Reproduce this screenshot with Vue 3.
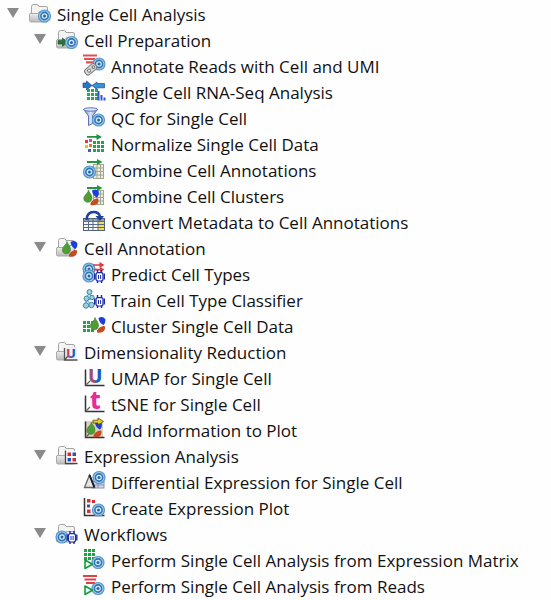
<template>
  <!-- Shared icon shapes -->
  <svg class="sprite" aria-hidden="true">
    <defs>
      <linearGradient id="folderFill" x1="0" y1="0" x2="0" y2="1">
        <stop offset="0" stop-color="#fafafa" />
        <stop offset="1" stop-color="#b8b8b8" />
      </linearGradient>
      <linearGradient id="arcFill" x1="0" y1="0.6" x2="1" y2="0.3">
        <stop offset="0.1" stop-color="#3f74b8" />
        <stop offset="0.3" stop-color="#d8394a" />
        <stop offset="0.5" stop-color="#2467c4" />
        <stop offset="1" stop-color="#1c50a8" />
      </linearGradient>
      <linearGradient id="funnelFill" x1="0" y1="0" x2="1" y2="0">
        <stop offset="0" stop-color="#7186c9" />
        <stop offset="0.5" stop-color="#dce5f8" />
        <stop offset="1" stop-color="#6f88c8" />
      </linearGradient>
      <g id="folder">
        <path d="M2.500 9V2.500Q2.500 .5 4.500 .5H8Q9.500 .5 10 2.500H17Q18.500 2.500 18.500 4V16H2.500Z" fill="#f4f4f4" stroke="#a4a4a4" />
        <path d="M1 9.500H9L10.500 7.500H18V18H2Q.5 18 .5 16.500V10Z" fill="url(#folderFill)" stroke="#aaa" />
      </g>
      <g id="cell">
        <circle r="6" fill="#a3c9ea" stroke="#5a97c9" stroke-width="1.200" />
        <circle r="3.600" fill="#d9ebf8" stroke="#2e76b4" stroke-width="1.600" />
        <circle r="1.500" fill="#1f67a8" />
      </g>
      <g id="robot">
        <path d="M3.500 0V3M7.500 0V3M3.500 10V13M7.500 10V13" stroke="#1b2aa5" stroke-width="1.400" fill="none" />
        <path d="M.7 3.500V9.500M10.300 3.500V9.500" stroke="#1b2aa5" stroke-width="1.400" />
        <rect x="2" y="2.700" width="7" height="8.300" rx="2" fill="#fff" stroke="#1b2aa5" stroke-width="1.200" />
        <path d="M4.500 5V9M6.600 5V9" stroke="#1b2aa5" />
      </g>
      <g id="clusters">
        <path d="M4.500 0C5 2.500 8.200 4.500 8 8C7.800 11 6 12.500 3.500 12.300C.3 12 -1 9 .3 6.500C1.500 4 4 3 4.500 0Z" fill="#4f9c36" stroke="#3f7f2d" stroke-width=".6" />
        <path d="M8 .5Q12 -2 14.800 1.500Q15.300 5.500 12.800 7.500Q8.500 5.500 8 .5Z" fill="#1a3fdc" />
        <path d="M6.500 13Q9 8.500 14 8.500Q15.500 11 13 14Q9.500 16 6.500 15Z" fill="#c74a20" />
      </g>
      <g id="axes">
        <path d="M2.500 1.500V17.500H21.500" fill="none" stroke="#333" stroke-width="1.500" />
        <path d="M2.500 17.500L7 13" stroke="#666" stroke-width="1.200" />
      </g>
      <g id="longArrow">
        <path d="M0 2H10V0L15.500 3L10 6V4H0Z" fill="#23963e" />
      </g>
      <g id="sheet">
        <rect x=".5" y=".5" width="10" height="14" fill="#efeedd" stroke="#a0a690" />
        <path d="M.5 4H10.500M.5 7.500H10.500M.5 11H10.500M4 .5V14.500M7.500 .5V14.500" stroke="#a0a690" />
      </g>
      <path id="play" d="M0 0V8.500L7.500 4.200Z" fill="#e9fff0" stroke="#159b43" stroke-width="1.600" stroke-linejoin="round" />

      <g id="icon-single-cell">
        <use href="#folder" />
        <use href="#cell" x="15.500" y="12" />
      </g>
      <g id="icon-preparation">
        <use href="#folder" />
        <path d="M2 10.500H6.500V8L11.500 12.200L6.500 16.500V14H2Z" fill="#28743a" stroke="#184f27" stroke-width=".6" />
        <use href="#cell" x="15.500" y="12.500" />
      </g>
      <g id="icon-annotate">
        <path d="M0 -.5H14M1 3H12M3 6.300H11" stroke="#dc5055" stroke-width="2.200" />
        <use href="#cell" x="16" y="8" />
        <g transform="translate(8 13) rotate(-40)">
          <rect x="-7" y="-3.300" width="13" height="6.600" rx="2.500" fill="#dadada" stroke="#7d7d7d" />
          <circle cx="3" cy="0" r="1.300" fill="#fff" stroke="#666" />
          <circle cx="-2.500" cy="0" r="1.500" fill="#fff" stroke="#777" />
        </g>
      </g>
      <g id="icon-rna">
        <path d="M0 1H3.500V-1L9 3.500L3.500 8V5.500H0Z" fill="#2377c5" stroke="#174f91" stroke-width=".7" />
        <path d="M9 3.500L14 0V1.500H21.500V5.800H14V7.500Z" fill="#3a8ed3" stroke="#174f91" stroke-width=".7" />
        <g fill="#28a650">
          <rect v-for="n in 9" :key="n" :x="4 + ((n - 1) % 3) * 4" :y="7 + Math.floor((n - 1) / 3) * 4" width="3" height="3" />
        </g>
        <path d="M15.500 18.500V9M18.500 18.500V13M21.500 18.500V15.500" stroke="#3157d8" stroke-width="2" />
      </g>
      <g id="icon-qc">
        <path d="M.7 1.500L5.500 8V17.500L9.500 15.500V8L14.500 1.500Z" fill="url(#funnelFill)" stroke="#5a72b9" />
        <ellipse cx="7.600" cy="1.500" rx="7" ry="1.700" fill="#dbe4f8" stroke="#5a72b9" />
        <use href="#cell" x="15.500" y="12" />
      </g>
      <g id="icon-normalize">
        <path d="M4 2H13.500V0L19 3L13.500 6V3.800H4Z" fill="#20913c" />
        <g fill="#25a349">
          <rect v-for="n in 9" :key="n" :x="10 + ((n - 1) % 3) * 4" :y="7 + Math.floor((n - 1) / 3) * 4" width="3" height="3" />
        </g>
        <rect x="2" y="6" width="3" height="3" fill="#e03a42" />
        <rect x="6" y="5" width="3" height="3" fill="#e93bd0" />
        <rect x="2" y="11" width="3" height="3" fill="#e3bf22" />
        <rect x="6" y="10" width="3" height="3" fill="#e07b2b" />
        <rect x="5" y="15" width="3" height="3" fill="#4b56c9" />
      </g>
      <g id="icon-combine-annotations">
        <use href="#sheet" x="10" y="4" />
        <use href="#longArrow" x="4" y="-1" />
        <use href="#cell" x="6.500" y="12" />
      </g>
      <g id="icon-combine-clusters">
        <use href="#sheet" x="10" y="4" />
        <use href="#longArrow" x="4" y="-1" />
        <use href="#clusters" x="1" y="4" />
      </g>
      <g id="icon-convert">
        <rect x=".5" y="6.500" width="21" height="12" fill="#f5f7fb" stroke="#53617c" />
        <rect x="1" y="7" width="20" height="3" fill="#93a2bb" />
        <rect x="15" y="9" width="6" height="9" fill="#f0db54" />
        <path d="M.5 9.500H21.500M.5 12.500H21.500M.5 15.500H21.500M5.500 6.500V18.500M10 6.500V18.500M15 6.500V18.500" stroke="#596a86" />
        <path d="M3.500 8Q4 0 10.500 0Q16 0 17 4.500" fill="none" stroke="#1f3f9b" stroke-width="2.400" />
        <path d="M12.500 4H21L17 9Z" fill="#1f3f9b" />
      </g>
      <g id="icon-annotation">
        <use href="#folder" />
        <use href="#clusters" x="6.500" y="3.500" />
      </g>
      <g id="icon-predict">
        <use href="#cell" x="6" y="5" />
        <use href="#cell" x="6" y="12" />
        <path d="M10 .2H16.500V-2L21.500 1L16.500 4V1.800H10ZM11 4.700H17V3L21.500 5.500L17 8V6.500H11Z" fill="#dc3a3e" />
        <use href="#robot" x="11" y="6" />
      </g>
      <g id="icon-train">
        <path d="M6 3L3 9.500L3 16M6 3L9 9L3 9.500L9 15.500L3 16" stroke="#3d8fab" fill="none" />
        <g fill="#9fd0e2" stroke="#3b8ba8">
          <circle cx="6.500" cy="2" r="2.500" />
          <circle cx="3.500" cy="8.500" r="2.500" />
          <circle cx="9" cy="7.500" r="2.200" />
          <circle cx="3" cy="15.500" r="2.700" />
          <circle cx="8.500" cy="15" r="2.700" />
        </g>
        <use href="#robot" x="11" y="5" />
      </g>
      <g id="icon-cluster">
        <g fill="#25a349">
          <rect v-for="n in 9" :key="n" :x="0 + ((n - 1) % 3) * 4" :y="5 + Math.floor((n - 1) / 3) * 4" width="3" height="3" />
        </g>
        <use href="#clusters" x="7.500" y="1.500" />
      </g>
      <g id="icon-dimensionality">
        <use href="#folder" />
        <rect x="8" y="5" width="13" height="13" fill="#eef0f4" />
        <path d="M8.500 6V18H21.500M8.500 18L12 14" fill="none" stroke="#555" stroke-width="1.300" />
        <text x="10" y="16" class="glyph small" fill="url(#arcFill)">U</text>
      </g>
      <g id="icon-umap">
        <use href="#axes" />
        <text x="5" y="15" class="glyph" fill="url(#arcFill)">U</text>
      </g>
      <g id="icon-tsne">
        <use href="#axes" />
        <text x="7" y="15" class="glyph tall" fill="#e62a9b">t</text>
      </g>
      <g id="icon-add">
        <rect x="2" y="1" width="18" height="16" fill="#d9d2bd" />
        <use href="#axes" />
        <use href="#clusters" x="4" y="2" />
        <path d="M10 .2H15V-2L20.500 1.500L15 5V3H10Z" fill="#f0cf24" stroke="#4a4217" stroke-width=".8" />
      </g>
      <g id="icon-expression">
        <use href="#folder" />
        <rect x="9" y="5" width="12" height="12" fill="#fff" />
        <path d="M9.500 4.500V17.500H21.500" fill="none" stroke="#444" stroke-width="1.300" />
        <path d="M11.500 6.500H15V10H11.500ZM16.500 12H20V15.500H16.500Z" fill="#d92c33" />
        <path d="M16.500 6.500H20V10H16.500ZM11.500 12H15V15.500H11.500Z" fill="#2d4fb4" />
      </g>
      <g id="icon-differential">
        <rect x="9" y="9.500" width="12" height="6.500" fill="#d5dcec" stroke="#8392b5" />
        <path d="M15 10V16M9 13H21" stroke="#8392b5" />
        <path d="M1.500 15.500L6.500 3L11.500 15.500Z" fill="#e5e5e5" stroke="#666" stroke-width="1.300" />
        <path d="M6.500 3L11.500 15.500" stroke="#1d1d1d" stroke-width="2" />
        <use href="#cell" x="16" y="5.500" />
      </g>
      <g id="icon-expression-plot">
        <path d="M1.500 0V17.500H21.500" fill="none" stroke="#333" stroke-width="1.500" />
        <path d="M4 1H7.500V4.500H4ZM9 2H12V5H9ZM4 11.500H7.500V15H4Z" fill="#d92c33" />
        <path d="M4 6.500H7V9.500H4Z" fill="#3b4fa8" />
        <use href="#cell" x="15.500" y="12" />
      </g>
      <g id="icon-workflows">
        <use href="#folder" />
        <use href="#cell" x="6" y="13" />
        <use href="#robot" x="10.500" y="7" />
      </g>
      <g id="icon-matrix">
        <g fill="#22a047">
          <rect v-for="n in 9" :key="n" :x="1 + ((n - 1) % 3) * 4" :y="-1 + Math.floor((n - 1) / 3) * 4" width="3" height="3" />
        </g>
        <use href="#cell" x="15" y="12.500" />
        <use href="#play" x="2" y="10" />
      </g>
      <g id="icon-reads">
        <path d="M0 0H14M1.500 3.500H13M3 7H12" stroke="#d8434b" stroke-width="2.200" />
        <use href="#cell" x="15" y="12.500" />
        <use href="#play" x="2" y="10" />
      </g>
    </defs>
  </svg>

  <ul class="tree">
    <li>
      <button type="button" class="row" :aria-expanded="rootOpen" @click="rootOpen = !rootOpen">
        <span class="arrow" :class="{ closed: !rootOpen }"></span>
        <svg class="icon" viewBox="0 0 22 22" aria-hidden="true"><use href="#icon-single-cell" /></svg>
        <span>Single Cell Analysis</span>
      </button>
      <ul v-if="rootOpen" class="branch">
        <li v-for="group in groups" :key="group.label">
          <button type="button" class="row" :aria-expanded="group.open" @click="group.open = !group.open">
            <span class="arrow" :class="{ closed: !group.open }"></span>
            <svg class="icon" viewBox="0 0 22 22" aria-hidden="true"><use :href="'#icon-' + group.icon" /></svg>
            <span>{{ group.label }}</span>
          </button>
          <ul v-if="group.open" class="branch">
            <li v-for="tool in group.tools" :key="tool.label">
              <button type="button" class="row leaf">
                <svg class="icon" viewBox="0 0 22 22" aria-hidden="true"><use :href="'#icon-' + tool.icon" /></svg>
                <span>{{ tool.label }}</span>
              </button>
            </li>
          </ul>
        </li>
      </ul>
    </li>
  </ul>
</template>

<script setup>
import { ref } from 'vue';

const rootOpen = ref(true);

const groups = ref([
  {
    label: 'Cell Preparation',
    icon: 'preparation',
    open: true,
    tools: [
      { label: 'Annotate Reads with Cell and UMI', icon: 'annotate' },
      { label: 'Single Cell RNA-Seq Analysis', icon: 'rna' },
      { label: 'QC for Single Cell', icon: 'qc' },
      { label: 'Normalize Single Cell Data', icon: 'normalize' },
      { label: 'Combine Cell Annotations', icon: 'combine-annotations' },
      { label: 'Combine Cell Clusters', icon: 'combine-clusters' },
      { label: 'Convert Metadata to Cell Annotations', icon: 'convert' }
    ]
  },
  {
    label: 'Cell Annotation',
    icon: 'annotation',
    open: true,
    tools: [
      { label: 'Predict Cell Types', icon: 'predict' },
      { label: 'Train Cell Type Classifier', icon: 'train' },
      { label: 'Cluster Single Cell Data', icon: 'cluster' }
    ]
  },
  {
    label: 'Dimensionality Reduction',
    icon: 'dimensionality',
    open: true,
    tools: [
      { label: 'UMAP for Single Cell', icon: 'umap' },
      { label: 'tSNE for Single Cell', icon: 'tsne' },
      { label: 'Add Information to Plot', icon: 'add' }
    ]
  },
  {
    label: 'Expression Analysis',
    icon: 'expression',
    open: true,
    tools: [
      { label: 'Differential Expression for Single Cell', icon: 'differential' },
      { label: 'Create Expression Plot', icon: 'expression-plot' }
    ]
  },
  {
    label: 'Workflows',
    icon: 'workflows',
    open: true,
    tools: [
      { label: 'Perform Single Cell Analysis from Expression Matrix', icon: 'matrix' },
      { label: 'Perform Single Cell Analysis from Reads', icon: 'reads' }
    ]
  }
]);
</script>

<style>
body {
  margin: 0;
  background: #fefefe;
}
</style>

<style scoped>
.sprite {
  position: absolute;
  width: 0;
  height: 0;
}

.tree,
.branch {
  list-style: none;
  margin: 0;
  padding: 0;
}

.tree {
  padding: 2px 0 0 7px;
  font-family: "Lucida Grande", "Open Sans", "Noto Sans", sans-serif;
  font-size: 17px;
  color: #111;
}

.branch {
  padding-left: 27px;
}

.row {
  display: flex;
  align-items: center;
  gap: 6px;
  width: 100%;
  height: 26px;
  padding: 0;
  border: 0;
  background: none;
  color: inherit;
  font: inherit;
  line-height: 26px;
  text-align: left;
  white-space: nowrap;
}

.row:focus-visible {
  outline: 1px solid #4385bd;
}

.leaf {
  padding-left: 22px;
}

.arrow {
  flex: none;
  width: 12px;
  height: 10px;
  margin: 0 4px 4px 0;
  background: #8a8a8a;
  clip-path: polygon(0 0, 100% 0, 50% 100%);
}

.arrow.closed {
  transform: rotate(-90deg);
}

.icon {
  flex: none;
  width: 22px;
  height: 22px;
  overflow: visible;
}

.glyph {
  font-family: "Noto Sans", sans-serif;
  font-size: 19px;
  font-weight: 800;
}

.glyph.small {
  font-size: 13px;
}

.glyph.tall {
  font-size: 24px;
}
</style>
